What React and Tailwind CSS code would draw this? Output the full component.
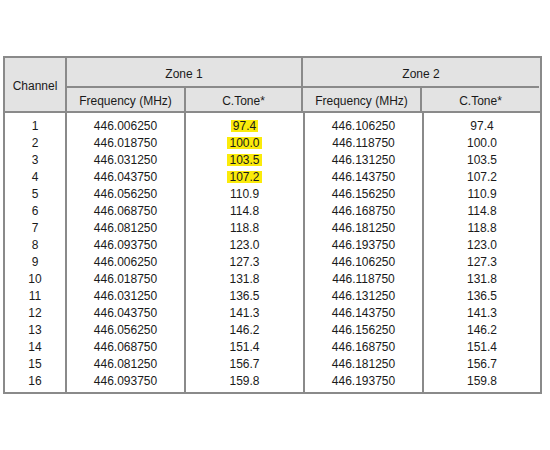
import React from "react";

const zone1 = [
  ["446.006250", "97.4"],
  ["446.018750", "100.0"],
  ["446.031250", "103.5"],
  ["446.043750", "107.2"],
  ["446.056250", "110.9"],
  ["446.068750", "114.8"],
  ["446.081250", "118.8"],
  ["446.093750", "123.0"],
  ["446.006250", "127.3"],
  ["446.018750", "131.8"],
  ["446.031250", "136.5"],
  ["446.043750", "141.3"],
  ["446.056250", "146.2"],
  ["446.068750", "151.4"],
  ["446.081250", "156.7"],
  ["446.093750", "159.8"],
];
const zone2f = [
  "446.106250", "446.118750", "446.131250", "446.143750",
  "446.156250", "446.168750", "446.181250", "446.193750",
  "446.106250", "446.118750", "446.131250", "446.143750",
  "446.156250", "446.168750", "446.181250", "446.193750",
];

function Col({ items, width, last, hl }) {
  return (
    <div
      className={`flex flex-col pt-[5px] pb-[2px] ${width} ${last ? "" : "border-r-2 border-[#8a8a8a]"}`}
    >
      {items.map((t, i) => (
        <div key={i} className="h-[17px] leading-[17px] text-center">
          {hl && i < 4 ? (
            <span className="bg-[#fbeb0a] px-[2px] inline-block leading-[12px]">{t}</span>
          ) : (
            t
          )}
        </div>
      ))}
    </div>
  );
}

export default function App() {
  return (
    <div className="w-[550px] h-[450px] bg-white pt-[56px] pl-[3px] text-[12px] text-[#1a1a1a] font-['Liberation_Sans',Arial,sans-serif]">
      <div className="w-[539px] border-2 border-[#8a8a8a]">
        <div className="flex bg-[#e3e3e3] border-b-2 border-[#8a8a8a]">
          <div className="w-[62px] border-r-2 border-[#8a8a8a] flex items-center justify-center pt-[3px]">
            Channel
          </div>
          {["Zone 1", "Zone 2"].map((z, zi) => (
            <div
              key={z}
              className={`flex flex-col w-[236px] ${zi === 0 ? "border-r-2 border-[#8a8a8a]" : ""}`}
            >
              <div className="h-[30px] border-b-2 border-[#8a8a8a] flex items-center justify-center pt-[3px]">
                {z}
              </div>
              <div className="flex h-[23px]">
                <div className="w-[119px] border-r-2 border-[#8a8a8a] flex items-center justify-center pt-[3px]">
                  Frequency (MHz)
                </div>
                <div className="flex-1 flex items-center justify-center pt-[3px]">C.Tone*</div>
              </div>
            </div>
          ))}
        </div>
        <div className="flex">
          <Col items={zone1.map((_, i) => String(i + 1))} width="w-[62px]" />
          <Col items={zone1.map((r) => r[0])} width="w-[119px]" />
          <Col items={zone1.map((r) => r[1])} width="w-[119px]" hl />
          <Col items={zone2f} width="w-[119px]" />
          <Col items={zone1.map((r) => r[1])} width="flex-1" last />
        </div>
      </div>
    </div>
  );
}
